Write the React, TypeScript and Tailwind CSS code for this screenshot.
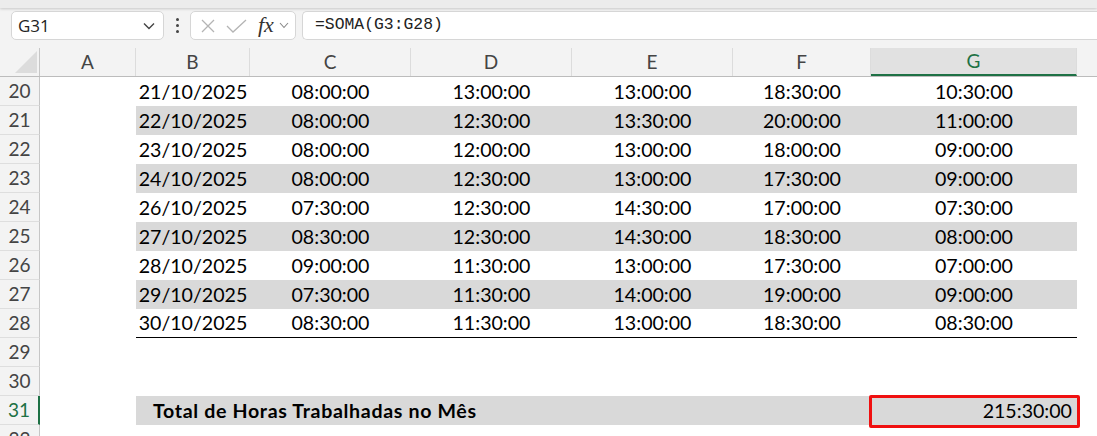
import React from 'react'

const cols = ['A', 'B', 'C', 'D', 'E', 'F', 'G']
const colW = ['w-[96px]', 'w-[114px]', 'w-[161px]', 'w-[161px]', 'w-[161px]', 'w-[138px]', 'w-[206px]']

const rows: string[][] = [
  ['21/10/2025', '08:00:00', '13:00:00', '13:00:00', '18:30:00', '10:30:00'],
  ['22/10/2025', '08:00:00', '12:30:00', '13:30:00', '20:00:00', '11:00:00'],
  ['23/10/2025', '08:00:00', '12:00:00', '13:00:00', '18:00:00', '09:00:00'],
  ['24/10/2025', '08:00:00', '12:30:00', '13:00:00', '17:30:00', '09:00:00'],
  ['26/10/2025', '07:30:00', '12:30:00', '14:30:00', '17:00:00', '07:30:00'],
  ['27/10/2025', '08:30:00', '12:30:00', '14:30:00', '18:30:00', '08:00:00'],
  ['28/10/2025', '09:00:00', '11:30:00', '13:00:00', '17:30:00', '07:00:00'],
  ['29/10/2025', '07:30:00', '11:30:00', '14:00:00', '19:00:00', '09:00:00'],
  ['30/10/2025', '08:30:00', '11:30:00', '13:00:00', '18:30:00', '08:30:00'],
]

const cellFont = { fontFamily: 'Lato, "Open Sans", sans-serif' }

function RowNum({ n, active }: { n: number; active?: boolean }) {
  return (
    <div
      className={
        'w-[40px] h-full flex items-center justify-center text-[19px] border-b border-[#dedede] ' +
        (active ? 'text-[#1e7145] border-r-2 border-r-[#1e7145]' : 'text-[#444] border-r border-r-[#c6c6c6]')
      }
      style={cellFont}
    >
      {n}
    </div>
  )
}

export default function App() {
  return (
    <div className="w-[1097px] h-[436px] overflow-hidden bg-[#f3f3f3] text-black">
      {/* ribbon edge */}
      <div className="h-[8px] bg-[#ececec] shadow-[0_1px_3px_rgba(0,0,0,0.18)]" />

      {/* formula bar */}
      <div className="flex items-center h-[29px] mt-[3px] pl-[11px]">
        <div className="w-[153px] h-[29px] bg-white border border-[#d6d6d6] rounded-[5px] flex items-center justify-between pl-[6px] pr-[8px]">
          <span className="text-[17px] text-[#222]" style={{ fontFamily: '"Open Sans", sans-serif' }}>G31</span>
          <svg width="12" height="8" viewBox="0 0 12 8"><path d="M1 1.5 L6 6.5 L11 1.5" fill="none" stroke="#444" strokeWidth="1.4" /></svg>
        </div>
        <div className="w-[26px] flex flex-col items-center gap-[3px]">
          <span className="w-[3px] h-[3px] bg-[#444] rounded-full" />
          <span className="w-[3px] h-[3px] bg-[#444] rounded-full" />
          <span className="w-[3px] h-[3px] bg-[#444] rounded-full" />
        </div>
        <div className="w-[106px] h-[29px] bg-white border border-[#d6d6d6] rounded-[5px] flex items-center pl-[9px]">
          <svg width="16" height="16" viewBox="0 0 16 16"><path d="M2 2 L14 14 M14 2 L2 14" stroke="#b4b4b4" strokeWidth="1.3" /></svg>
          <svg className="ml-[10px]" width="21" height="16" viewBox="0 0 21 16"><path d="M1 8 L7 14 L20 2" fill="none" stroke="#b4b4b4" strokeWidth="1.3" /></svg>
          <span className="ml-[11px] italic text-[22px] leading-none text-[#333] pb-[2px]" style={{ fontFamily: '"Liberation Serif", serif' }}>fx</span>
          <svg className="ml-[5px]" width="10" height="7" viewBox="0 0 10 7"><path d="M1 1 L5 5.5 L9 1" fill="none" stroke="#888" strokeWidth="1.1" /></svg>
        </div>
        <div className="ml-[6px] flex-1 h-[29px] bg-white border border-r-0 border-[#d6d6d6] rounded-l-[5px] flex items-center pl-[12px]">
          <span className="text-[16.4px] text-[#222]" style={{ fontFamily: '"Liberation Mono", monospace' }}>=SOMA(G3:G28)</span>
        </div>
      </div>

      {/* column headers */}
      <div className="flex h-[29px] mt-[8px] border-b border-[#bcbcbc]">
        <div className="w-[40px] h-full relative border-r border-[#c6c6c6]">
          <svg className="absolute left-[15px] top-[3px]" width="22" height="22" viewBox="0 0 22 22"><path d="M22 0 L22 22 L0 22 Z" fill="#dcdcdc" /></svg>
        </div>
        {cols.map((c, i) => (
          <div
            key={c}
            className={
              colW[i] +
              ' h-full flex items-center justify-center text-[19px] border-r border-[#dcdcdc] ' +
              (c === 'G' ? 'bg-[#e1e1e1] text-[#1e7145] border-b-2 border-b-[#1e7145]' : 'text-[#444]')
            }
            style={cellFont}
          >
            {c}
          </div>
        ))}
        <div className="flex-1" />
      </div>

      {/* data rows */}
      <div className="bg-white">
        {rows.map((r, i) => {
          const shaded = i % 2 === 1
          const last = i === rows.length - 1
          return (
            <div key={i} className="flex h-[29px]">
              <div className="bg-[#f3f3f3]"><RowNum n={20 + i} /></div>
              <div className="w-[96px]" />
              <div className={'flex ' + (shaded ? 'bg-[#d9d9d9] ' : '') + (last ? 'border-b border-black' : '')}>
                {r.map((v, j) => (
                  <div key={j} className={colW[j + 1] + ' h-full flex items-center justify-center text-[19.6px]'} style={cellFont}>
                    {v}
                  </div>
                ))}
              </div>
            </div>
          )
        })}
        {[29, 30].map((n) => (
          <div key={n} className="flex h-[29px]">
            <div className="bg-[#f3f3f3]"><RowNum n={n} /></div>
          </div>
        ))}
        <div className="flex h-[29px]">
          <div className="bg-[#f3f3f3]"><RowNum n={31} active /></div>
          <div className="w-[96px]" />
          <div className="flex bg-[#d9d9d9]">
            <div className="w-[735px] h-full flex items-center pl-[17px] text-[19.6px] font-bold tracking-[0.65px]" style={cellFont}>
              Total de Horas Trabalhadas no Mês
            </div>
            <div className="w-[206px] h-full relative flex items-center justify-end pr-[5px] text-[19.6px]" style={cellFont}>
              <div className="absolute -left-[2px] -right-[3px] -top-[1px] -bottom-[3px] border-[3px] border-[#f01010] rounded-[2px]" />
              215:30:00
            </div>
          </div>
        </div>
        <div className="flex h-[29px]">
          <div className="bg-[#f3f3f3]"><RowNum n={32} /></div>
        </div>
      </div>
    </div>
  )
}
